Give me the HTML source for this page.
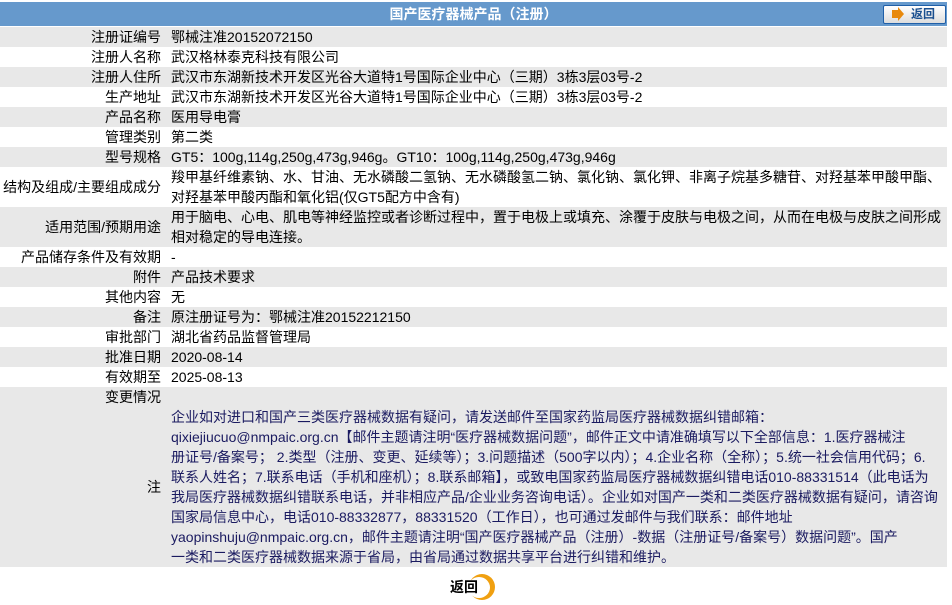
<!DOCTYPE html>
<html><head><meta charset="utf-8">
<style>
body{margin:0;background:#fff;font-family:"Liberation Sans","Noto Sans CJK SC",sans-serif;font-size:14px;color:#000;}
.hdr{position:absolute;left:0;top:2px;width:947px;height:24px;background:#6699cc;color:#fff;font-weight:bold;text-align:center;line-height:24px;font-size:14px;}
.btn{position:absolute;left:883px;top:5px;width:61px;height:17px;border:1px solid #1f5fa8;border-radius:2px;background:linear-gradient(#fff,#ddd);font-weight:bold;color:#1a4f8f;font-size:12px;line-height:17px;}
.btn .ar{position:absolute;left:8px;top:4px;width:6px;height:8px;background:#e8890c;}
.btn .ar:after{content:"";position:absolute;left:6px;top:-3px;border-left:6px solid #e8890c;border-top:7px solid transparent;border-bottom:7px solid transparent;}
.btn span{position:absolute;left:27px;top:0;}
table{position:absolute;left:0;top:27px;width:947px;border-collapse:collapse;}
td{padding:0;line-height:20px;height:20px;white-space:nowrap;vertical-align:middle;}
td.l{width:161px;text-align:right;padding-right:10px;}
tr.g td{background:#e8e8e8;}
.note{color:#1a1a60;}
.bb{position:absolute;left:449px;top:573px;width:50px;height:30px;}
.bb .c{position:absolute;left:20px;top:1px;width:26px;height:26px;border-radius:50%;background:#f0a010;}
.bb .c:after{content:"";position:absolute;left:-1px;top:3px;width:22px;height:21px;border-radius:50%;background:#fff;}
.bb span{position:absolute;left:1px;top:4px;font-weight:bold;font-size:14px;}
</style></head><body>
<div class="hdr">国产医疗器械产品（注册）</div>
<div class="btn"><div class="ar"></div><span>返回</span></div>
<table>
<tr class="g"><td class="l">注册证编号</td><td>鄂械注准20152072150</td></tr>
<tr><td class="l">注册人名称</td><td>武汉格林泰克科技有限公司</td></tr>
<tr class="g"><td class="l">注册人住所</td><td>武汉市东湖新技术开发区光谷大道特1号国际企业中心（三期）3栋3层03号-2</td></tr>
<tr><td class="l">生产地址</td><td>武汉市东湖新技术开发区光谷大道特1号国际企业中心（三期）3栋3层03号-2</td></tr>
<tr class="g"><td class="l">产品名称</td><td>医用导电膏</td></tr>
<tr><td class="l">管理类别</td><td>第二类</td></tr>
<tr class="g"><td class="l">型号规格</td><td>GT5：100g,114g,250g,473g,946g。GT10：100g,114g,250g,473g,946g</td></tr>
<tr><td class="l">结构及组成/主要组成成分</td><td>羧甲基纤维素钠、水、甘油、无水磷酸二氢钠、无水磷酸氢二钠、氯化钠、氯化钾、非离子烷基多糖苷、对羟基苯甲酸甲酯、<br>对羟基苯甲酸丙酯和氧化铝(仅GT5配方中含有)</td></tr>
<tr class="g"><td class="l">适用范围/预期用途</td><td>用于脑电、心电、肌电等神经监控或者诊断过程中，置于电极上或填充、涂覆于皮肤与电极之间，从而在电极与皮肤之间形成<br>相对稳定的导电连接。</td></tr>
<tr><td class="l">产品储存条件及有效期</td><td>-</td></tr>
<tr class="g"><td class="l">附件</td><td>产品技术要求</td></tr>
<tr><td class="l">其他内容</td><td>无</td></tr>
<tr class="g"><td class="l">备注</td><td>原注册证号为：鄂械注准20152212150</td></tr>
<tr><td class="l">审批部门</td><td>湖北省药品监督管理局</td></tr>
<tr class="g"><td class="l">批准日期</td><td>2020-08-14</td></tr>
<tr><td class="l">有效期至</td><td>2025-08-13</td></tr>
<tr class="g"><td class="l">变更情况</td><td></td></tr>
<tr class="g"><td class="l">注</td><td class="note">企业如对进口和国产三类医疗器械数据有疑问，请发送邮件至国家药监局医疗器械数据纠错邮箱：<br>qixiejiucuo@nmpaic.org.cn【邮件主题请注明“医疗器械数据问题”，邮件正文中请准确填写以下全部信息：1.医疗器械注<br>册证号/备案号； 2.类型（注册、变更、延续等）；3.问题描述（500字以内）；4.企业名称（全称）；5.统一社会信用代码；6.<br>联系人姓名；7.联系电话（手机和座机）；8.联系邮箱】，或致电国家药监局医疗器械数据纠错电话010-88331514（此电话为<br>我局医疗器械数据纠错联系电话，并非相应产品/企业业务咨询电话）。企业如对国产一类和二类医疗器械数据有疑问，请咨询<br>国家局信息中心，电话010-88332877，88331520（工作日），也可通过发邮件与我们联系：邮件地址<br>yaopinshuju@nmpaic.org.cn，邮件主题请注明“国产医疗器械产品（注册）-数据（注册证号/备案号）数据问题”。国产<br>一类和二类医疗器械数据来源于省局，由省局通过数据共享平台进行纠错和维护。</td></tr>
</table>
<div class="bb"><div class="c"></div><span>返回</span></div>
</body></html>
